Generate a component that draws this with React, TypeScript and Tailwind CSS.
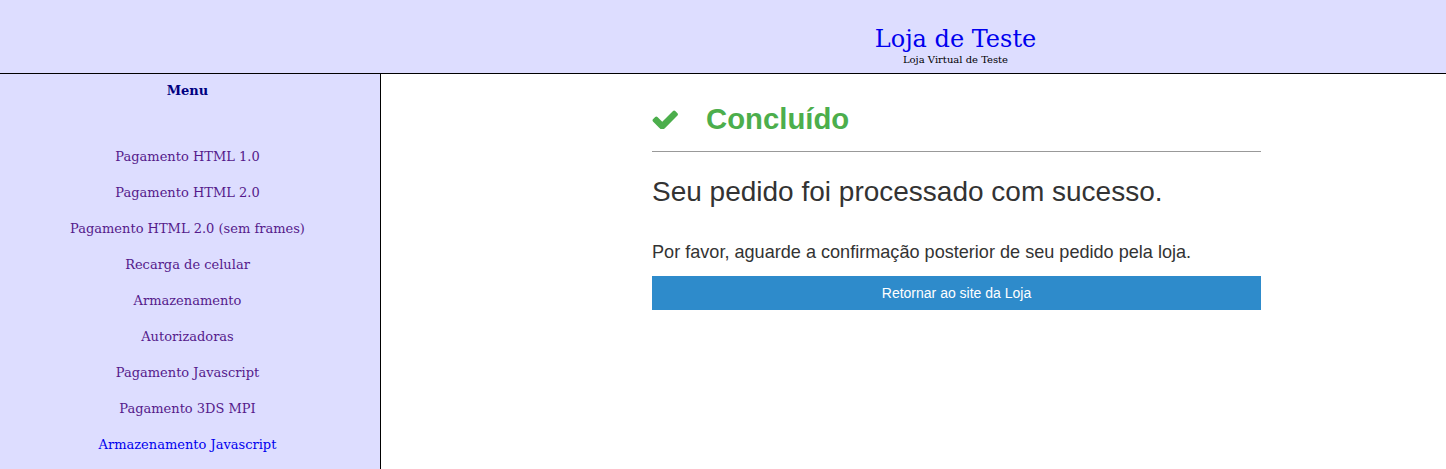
import React from "react";

const items = [
  "Pagamento HTML 1.0",
  "Pagamento HTML 2.0",
  "Pagamento HTML 2.0 (sem frames)",
  "Recarga de celular",
  "Armazenamento",
  "Autorizadoras",
  "Pagamento Javascript",
  "Pagamento 3DS MPI",
];

export default function App() {
  return (
    <div className="w-[1446px] h-[469px] overflow-hidden bg-white flex flex-col">
      <header className="h-[74px] shrink-0 bg-[#ddddff] border-b border-black flex flex-col items-center pl-[465px] pt-[25px] font-['DejaVu_Serif',serif]">
        <div className="text-[24px] leading-[28px] text-[#0000ee]">Loja de Teste</div>
        <div className="mt-[1px] text-[10px] leading-[12px] text-black">Loja Virtual de Teste</div>
      </header>
      <div className="flex flex-1 min-h-0">
        <aside className="w-[381px] shrink-0 bg-[#ddddff] border-r border-black flex flex-col items-center pt-[9px] pr-[5px] font-['DejaVu_Serif',serif] text-[13px]">
          <div className="h-[16px] leading-[16px] font-bold text-[#000080]">Menu</div>
          <div className="mt-[40px] flex flex-col items-center w-full">
            {items.map((t) => (
              <a key={t} href="#" className="h-[36px] leading-[16px] flex items-center text-[#551a8b]">
                {t}
              </a>
            ))}
            <a href="#" className="h-[36px] leading-[16px] flex items-center text-[#0000ee]">
              Armazenamento Javascript
            </a>
          </div>
        </aside>
        <main className="flex-1 pl-[271px] font-['Liberation_Sans',Arial,sans-serif] text-[#333333]">
          <div className="w-[609px]">
            <div className="flex items-center h-[36px] mt-[27px]">
              <svg width="26" height="20" viewBox="90 262 1585 1170" className="mr-[28px] shrink-0">
                <path
                  fill="#4cae4c"
                  d="M1671 566q0 40-28 68l-724 724-136 136q-28 28-68 28t-68-28l-136-136-362-362q-28-28-28-68t28-68l136-136q28-28 68-28t68 28l294 295 656-657q28-28 68-28t68 28l136 136q28 28 28 68z"
                />
              </svg>
              <h1 className="text-[29.3px] leading-[36px] font-bold text-[#4cae4c]">Concluído</h1>
            </div>
            <div className="mt-[14px] border-t border-[#999999]" />
            <h2 className="mt-[24px] text-[28px] leading-[32px]">Seu pedido foi processado com sucesso.</h2>
            <p className="mt-[33px] text-[18.1px] leading-[22px]">
              Por favor, aguarde a confirmação posterior de seu pedido pela loja.
            </p>
            <button className="mt-[13px] w-full h-[34px] bg-[#2e8bcb] text-white text-[14px] leading-[16px]">
              Retornar ao site da Loja
            </button>
          </div>
        </main>
      </div>
    </div>
  );
}
